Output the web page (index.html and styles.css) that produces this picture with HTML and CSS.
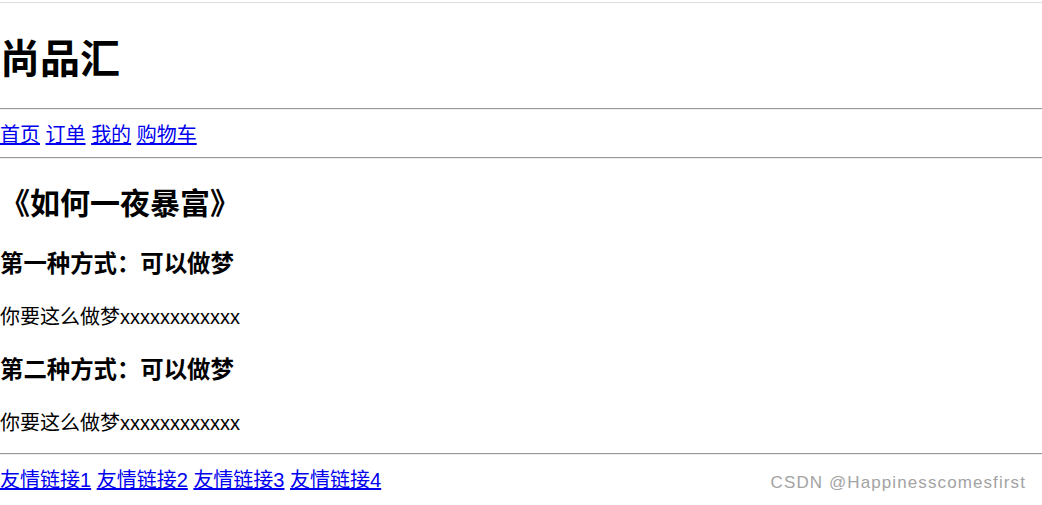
FILE: index.html
```html
<!DOCTYPE html>
<html lang="zh-CN">
<head>
    <meta charset="UTF-8">
    <meta name="viewport" content="width=device-width, initial-scale=1.0">
    <title>尚品汇</title>
    <link rel="stylesheet" href="styles.css">
</head>
<body>

    <header class="header">
        <h1 class="logo">尚品汇</h1>
        <hr class="rule">
        <nav class="nav">
            <a href="#/home">首页</a>
            <a href="#/order">订单</a>
            <a href="#/mine">我的</a>
            <a href="#/cart">购物车</a>
        </nav>
        <hr class="rule">
    </header>

    <main class="content">
        <h2 class="title">《如何一夜暴富》</h2>
        <h3 class="way">第一种方式：可以做梦</h3>
        <p class="text">你要这么做梦xxxxxxxxxxxx</p>
        <h3 class="way">第二种方式：可以做梦</h3>
        <p class="text">你要这么做梦xxxxxxxxxxxx</p>
    </main>

    <footer class="footer">
        <hr class="rule rule-footer">
        <div class="links">
            <a href="#">友情链接1</a>
            <a href="#">友情链接2</a>
            <a href="#">友情链接3</a>
            <a href="#">友情链接4</a>
        </div>
    </footer>

    <span class="watermark">CSDN @Happinesscomesfirst</span>

</body>
</html>
```

FILE: styles.css
```css
html {
    margin: 0;
    padding-top: 2px;
    background-color: #fff;
}

body {
    font-family: "Liberation Sans", "Noto Sans CJK SC", sans-serif;
    font-size: 20px;
    color: #000;
    margin: 0;
    border-top: 1px solid #dedede;
    position: relative;
    height: 500px;
}

a {
    color: #0000ee;
    text-decoration: underline;
}

.rule {
    height: 0;
    margin: 0;
    border: 0;
    border-top: 1px solid #9a9a9a;
    border-bottom: 1px solid #eeeeee;
}

.logo {
    font-size: 40px;
    line-height: 52px;
    font-weight: bold;
    margin: 30px 0 23px;
}

.nav {
    line-height: 26px;
    padding: 12px 0 9px;
}

.title {
    font-size: 30px;
    line-height: 40px;
    font-weight: bold;
    margin: 25px 0 0;
}

.way {
    font-size: 23.4px;
    line-height: 31px;
    font-weight: bold;
    margin: 25px 0 0;
}

.text {
    line-height: 26px;
    margin: 24px 0 0;
}

.rule-footer {
    margin-top: 17px;
}

.links {
    line-height: 26px;
    padding-top: 12px;
}

.watermark {
    position: absolute;
    top: 470px;
    right: 16px;
    font-family: "Liberation Sans", sans-serif;
    font-size: 17px;
    line-height: 20px;
    letter-spacing: 1.1px;
    color: #a3a3a3;
}
```
